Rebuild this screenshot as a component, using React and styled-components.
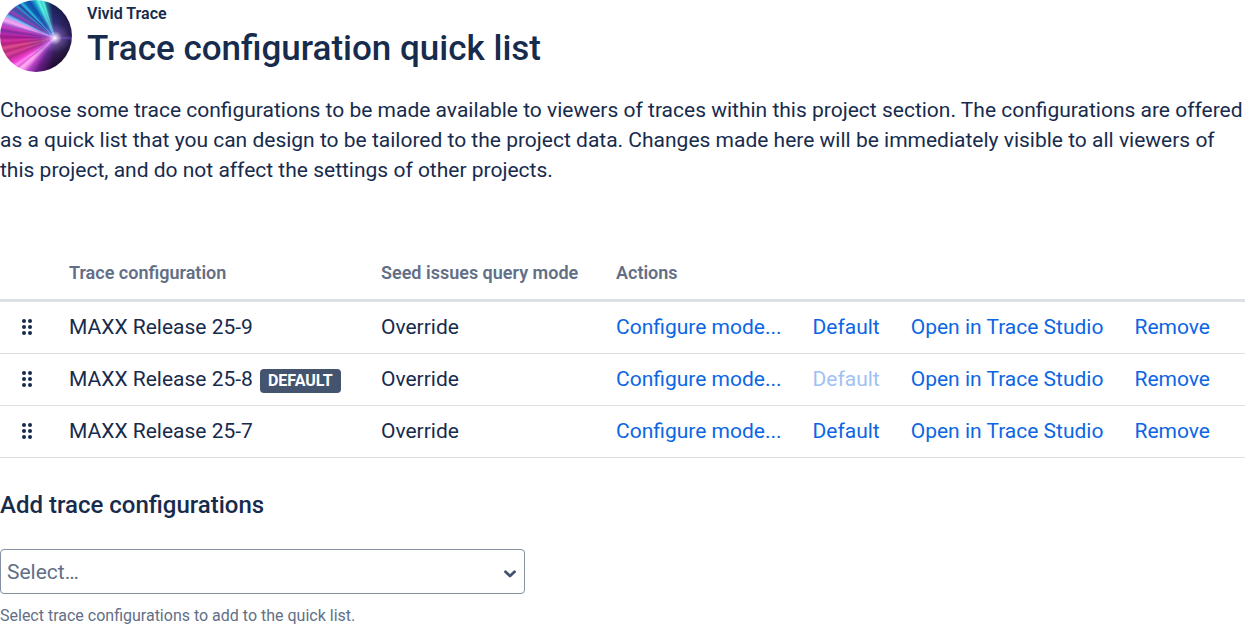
import React, { useState } from "react";
import styled, { createGlobalStyle } from "styled-components";

const configurations = [
  { id: "25-9", name: "MAXX Release 25-9", mode: "Override" },
  { id: "25-8", name: "MAXX Release 25-8", mode: "Override" },
  { id: "25-7", name: "MAXX Release 25-7", mode: "Override" },
];

const DragIcon = () => (
  <svg width="12" height="18" viewBox="0 0 12 18" fill="currentColor" aria-hidden="true">
    <circle cx="3" cy="3" r="2" />
    <circle cx="9" cy="3" r="2" />
    <circle cx="3" cy="9" r="2" />
    <circle cx="9" cy="9" r="2" />
    <circle cx="3" cy="15" r="2" />
    <circle cx="9" cy="15" r="2" />
  </svg>
);

const ChevronIcon = () => (
  <svg width="14" height="10" viewBox="0 0 14 10" fill="none" aria-hidden="true">
    <path
      d="M2.5 2.8 L7 7 L11.5 2.8"
      stroke="#44546f"
      strokeWidth="2.8"
      strokeLinecap="round"
      strokeLinejoin="round"
    />
  </svg>
);

const App = () => {
  const [defaultId, setDefaultId] = useState("25-8");

  return (
    <StyledPage>
      <GlobalStyle />
      <StyledHeader>
        <StyledLogo />
        <div>
          <StyledProduct>Vivid Trace</StyledProduct>
          <StyledTitle>Trace configuration quick list</StyledTitle>
        </div>
      </StyledHeader>

      <StyledIntro>
        Choose some trace configurations to be made available to viewers of
        traces within this project section. The configurations are offered as a
        quick list that you can design to be tailored to the project data.
        Changes made here will be immediately visible to all viewers of this
        project, and do not affect the settings of other projects.
      </StyledIntro>

      <StyledTable>
        <thead>
          <tr>
            <StyledHeading $width="69px" />
            <StyledHeading $width="312px">Trace configuration</StyledHeading>
            <StyledHeading $width="235px">Seed issues query mode</StyledHeading>
            <StyledHeading>Actions</StyledHeading>
          </tr>
        </thead>
        <tbody>
          {configurations.map((item) => (
            <tr key={item.id}>
              <StyledCell>
                <StyledHandle type="button" aria-label={`Move ${item.name}`}>
                  <DragIcon />
                </StyledHandle>
              </StyledCell>
              <StyledCell>
                <StyledName>
                  {item.name}
                  {item.id === defaultId && <StyledBadge>DEFAULT</StyledBadge>}
                </StyledName>
              </StyledCell>
              <StyledCell>{item.mode}</StyledCell>
              <StyledCell>
                <StyledActions>
                  <StyledAction type="button">Configure mode...</StyledAction>
                  <StyledAction
                    type="button"
                    disabled={item.id === defaultId}
                    onClick={() => setDefaultId(item.id)}
                  >
                    Default
                  </StyledAction>
                  <StyledAction type="button">Open in Trace Studio</StyledAction>
                  <StyledAction type="button">Remove</StyledAction>
                </StyledActions>
              </StyledCell>
            </tr>
          ))}
        </tbody>
      </StyledTable>

      <StyledLabel htmlFor="add-configurations">
        Add trace configurations
      </StyledLabel>
      <StyledSelectBox>
        <StyledSelect
          id="add-configurations"
          defaultValue=""
          aria-describedby="add-help"
        >
          <option value="">Select…</option>
        </StyledSelect>
        <ChevronIcon />
      </StyledSelectBox>
      <StyledHelp id="add-help">
        Select trace configurations to add to the quick list.
      </StyledHelp>
    </StyledPage>
  );
};

export default App;

const GlobalStyle = createGlobalStyle`
  * {
    box-sizing: border-box;
  }

  body {
    margin: 0;
    background: #ffffff;
    color: #172b4d;
    font-family: Roboto, sans-serif;
    font-size: 21px;
    line-height: 30px;
  }

  button,
  select {
    font: inherit;
  }
`;

const StyledPage = styled.main`
  display: flex;
  flex-direction: column;
`;

const StyledHeader = styled.header`
  display: flex;
  gap: 15px;
  height: 72px;
`;

const StyledLogo = styled.div`
  width: 72px;
  height: 72px;
  flex-shrink: 0;
  border-radius: 50%;
  background: radial-gradient(
      circle at 55px 38px,
      #ffffff 0,
      rgba(235, 215, 255, 0.9) 2px,
      rgba(165, 135, 240, 0.5) 7px,
      rgba(100, 75, 180, 0.3) 15px,
      transparent 30px
    ),
    conic-gradient(
      from 0deg at 55px 38px,
      #1b2058 0deg,
      #14103a 30deg,
      #120a2c 80deg,
      #4b2995 90deg,
      #120a2c 100deg,
      #0b0413 150deg,
      #200a30 185deg,
      #641c82 208deg,
      #ba45c8 220deg,
      #f58bea 225deg,
      #ffb4f3 229deg,
      #e85bdd 232deg,
      #ff8bed 235deg,
      #f23fd6 239deg,
      #d934b4 243deg,
      #b32a86 247deg,
      #db429e 251deg,
      #b32b74 255deg,
      #e04f90 259deg,
      #b5207e 263deg,
      #d12fa2 267deg,
      #9a1a86 271deg,
      #b62ab1 275deg,
      #7d2b9e 278deg,
      #cf38bb 282deg,
      #a055cc 285deg,
      #f7a8f1 289deg,
      #e896f2 292deg,
      #6fc0ef 295deg,
      #4f50c0 298deg,
      #a53cab 301deg,
      #2f5fba 304deg,
      #663ba5 307deg,
      #2098cc 310deg,
      #2a3ba4 313deg,
      #2ac0e0 316deg,
      #1264b8 320deg,
      #0b50a6 325deg,
      #1784c8 329deg,
      #20b9d0 332deg,
      #69f6e4 336deg,
      #35d5cf 339deg,
      #61eddf 342deg,
      #237492 346deg,
      #1b2058 355deg
    );
`;

const StyledProduct = styled.div`
  padding-top: 4px;
  font-size: 16px;
  font-weight: 600;
  line-height: 20px;
`;

const StyledTitle = styled.h1`
  margin: 4px 0 0;
  font-size: 35px;
  font-weight: 500;
  line-height: 42px;
`;

const StyledIntro = styled.p`
  margin: 23px 0 61px;
`;

const StyledTable = styled.table`
  width: 100%;
  table-layout: fixed;
  border-collapse: separate;
  border-spacing: 0;
`;

const StyledHeading = styled.th`
  width: ${(props) => props.$width || "auto"};
  height: 56px;
  padding: 0;
  border-bottom: 3px solid #dcdfe4;
  color: #626f86;
  font-size: 18px;
  font-weight: 600;
  text-align: left;
`;

const StyledCell = styled.td`
  height: 52px;
  padding: 0 0 2px;
  border-bottom: 1px solid #dcdfe4;
`;

const StyledHandle = styled.button`
  display: flex;
  margin: 0;
  padding: 0 21px;
  border: 0;
  background: none;
  color: #172b4d;
  cursor: grab;
`;

const StyledName = styled.div`
  display: flex;
  align-items: center;
  gap: 7px;
`;

const StyledBadge = styled.span`
  margin-top: 4px;
  padding: 0 8px;
  border-radius: 4px;
  background: #44546f;
  color: #ffffff;
  font-size: 16px;
  font-weight: 700;
  line-height: 24px;
`;

const StyledActions = styled.div`
  display: flex;
  gap: 31px;
`;

const StyledAction = styled.button`
  padding: 0;
  border: 0;
  background: none;
  color: #0c66e4;
  white-space: nowrap;
  cursor: pointer;

  &:disabled {
    opacity: 0.4;
    cursor: default;
  }
`;

const StyledLabel = styled.label`
  margin: 32px 0 29px;
  font-size: 24px;
  font-weight: 500;
`;

const StyledSelectBox = styled.div`
  display: grid;
  align-items: center;
  width: 100%;
  max-width: 525px;

  > * {
    grid-area: 1 / 1;
  }

  svg {
    justify-self: end;
    margin: 4px 8px 0 0;
    pointer-events: none;
  }
`;

const StyledSelect = styled.select`
  width: 100%;
  height: 45px;
  padding: 0 36px 0 6px;
  appearance: none;
  border: 1px solid #8590a2;
  border-radius: 4px;
  background: #ffffff;
  color: #626f86;
`;

const StyledHelp = styled.p`
  margin: 12px 0 0;
  color: #626f86;
  font-size: 16px;
  line-height: 20px;
`;
